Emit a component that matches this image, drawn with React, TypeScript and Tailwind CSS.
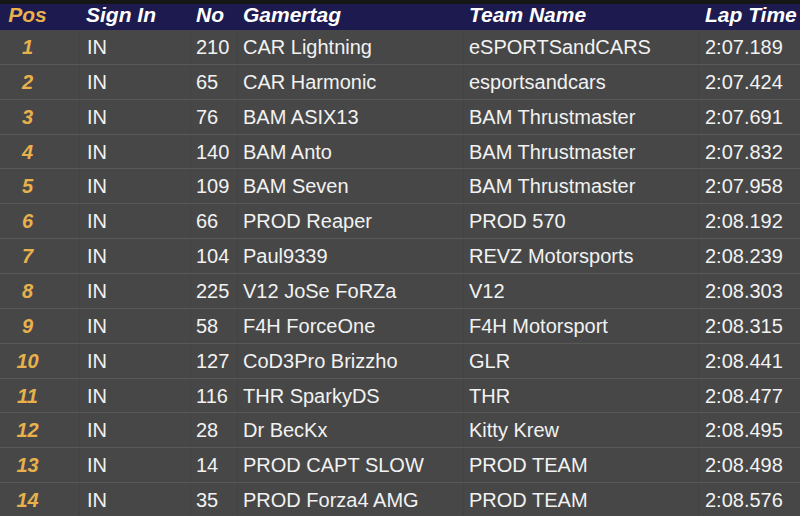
import React from "react";

const rows: [string, string, string, string, string][] = [
  ["1", "210", "CAR Lightning", "eSPORTSandCARS", "2:07.189"],
  ["2", "65", "CAR Harmonic", "esportsandcars", "2:07.424"],
  ["3", "76", "BAM ASIX13", "BAM Thrustmaster", "2:07.691"],
  ["4", "140", "BAM Anto", "BAM Thrustmaster", "2:07.832"],
  ["5", "109", "BAM Seven", "BAM Thrustmaster", "2:07.958"],
  ["6", "66", "PROD Reaper", "PROD 570", "2:08.192"],
  ["7", "104", "Paul9339", "REVZ Motorsports", "2:08.239"],
  ["8", "225", "V12 JoSe FoRZa", "V12", "2:08.303"],
  ["9", "58", "F4H ForceOne", "F4H Motorsport", "2:08.315"],
  ["10", "127", "CoD3Pro Brizzho", "GLR", "2:08.441"],
  ["11", "116", "THR SparkyDS", "THR", "2:08.477"],
  ["12", "28", "Dr BecKx", "Kitty Krew", "2:08.495"],
  ["13", "14", "PROD CAPT SLOW", "PROD TEAM", "2:08.498"],
  ["14", "35", "PROD Forza4 AMG", "PROD TEAM", "2:08.576"],
];

const grid = "grid grid-cols-[79px_111px_47px_226px_235px_1fr]";

export default function App() {
  return (
    <div
      className="w-[800px] h-[516px] overflow-hidden bg-[#474747] text-[#f2f2f2]"
      style={{ fontFamily: '"Liberation Sans", Arial, sans-serif' }}
    >
      <div className="h-[4px] bg-[#151515]" />
      <div className={`${grid} h-[26px] bg-[#1c1a4e] items-start text-[21px] leading-none font-bold italic text-white`}>
        <div className="w-[55px] text-center text-[#e8b14c]">Pos</div>
        <div className="pl-[7px]">Sign In</div>
        <div className="pl-[6px]">No</div>
        <div className="pl-[6px]">Gamertag</div>
        <div className="pl-[6px]">Team Name</div>
        <div className="pl-[7px] whitespace-nowrap">Lap Time</div>
      </div>
      {rows.map((r) => (
        <div
          key={r[0]}
          className={`${grid} h-[34.86px] border-b border-[#595959] text-[20px] items-stretch`}
        >
          <div className="flex items-center">
            <span className="w-[55px] text-center font-bold italic text-[#e8b14c]">{r[0]}</span>
          </div>
          <div className="flex items-center pl-[7px] border-l border-[#424242]">IN</div>
          <div className="flex items-center pl-[5px] border-l border-[#424242]">{r[1]}</div>
          <div className="flex items-center pl-[5px] border-l border-[#424242] whitespace-nowrap">{r[2]}</div>
          <div className="flex items-center pl-[5px] border-l border-[#424242] whitespace-nowrap">{r[3]}</div>
          <div className="flex items-center pl-[6px] border-l border-[#424242]">{r[4]}</div>
        </div>
      ))}
    </div>
  );
}
